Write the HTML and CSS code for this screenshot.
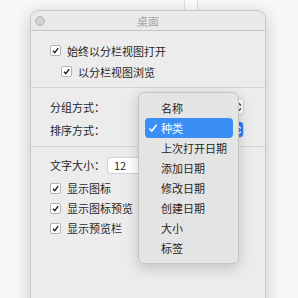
FILE: index.html
```html
<!DOCTYPE html>
<html lang="zh-CN">
<head>
    <meta charset="UTF-8">
    <title>桌面</title>
    <link rel="stylesheet" href="styles.css">
</head>
<body>
    <div class="behind"></div>
    <div class="window">
        <div class="titlebar">
            <span class="light"></span>
            <span class="title">桌面</span>
        </div>

        <div class="section first">
            <label class="check-row"><span class="box"><svg viewBox="0 0 10 10"><path d="M2.2 5.2 L4.2 7.4 L8 2.4" /></svg></span>始终以分栏视图打开</label>
            <label class="check-row indent"><span class="box"><svg viewBox="0 0 10 10"><path d="M2.2 5.2 L4.2 7.4 L8 2.4" /></svg></span>以分栏视图浏览</label>
        </div>

        <div class="section second">
            <div class="field-row">
                <span class="label">分组方式：</span>
                <span class="popup"><span class="arrows"><svg viewBox="0 0 8 14"><path d="M2 5.5 L4 3.5 L6 5.5 M2 8.5 L4 10.5 L6 8.5" /></svg></span></span>
            </div>
            <div class="field-row">
                <span class="label">排序方式：</span>
                <span class="popup"><span class="arrows blue"><svg viewBox="0 0 8 14"><path d="M2 5.5 L4 3.5 L6 5.5 M2 8.5 L4 10.5 L6 8.5" /></svg></span></span>
            </div>
        </div>

        <div class="section third">
            <div class="field-row size-row">
                <span class="label short">文字大小：</span>
                <span class="textbox">12</span>
            </div>
            <label class="check-row"><span class="box"><svg viewBox="0 0 10 10"><path d="M2.2 5.2 L4.2 7.4 L8 2.4" /></svg></span>显示图标</label>
            <label class="check-row"><span class="box"><svg viewBox="0 0 10 10"><path d="M2.2 5.2 L4.2 7.4 L8 2.4" /></svg></span>显示图标预览</label>
            <label class="check-row"><span class="box"><svg viewBox="0 0 10 10"><path d="M2.2 5.2 L4.2 7.4 L8 2.4" /></svg></span>显示预览栏</label>
        </div>

        <div class="menu">
            <div class="item">名称</div>
            <div class="item selected"><svg class="tick" viewBox="0 0 10 10"><path d="M1.5 5.4 L3.8 8 L8.6 1.8" /></svg>种类</div>
            <div class="item">上次打开日期</div>
            <div class="item">添加日期</div>
            <div class="item">修改日期</div>
            <div class="item">创建日期</div>
            <div class="item">大小</div>
            <div class="item">标签</div>
        </div>
    </div>
</body>
</html>
```

FILE: styles.css
```css
body {
    margin: 0;
    height: 298px;
    overflow: hidden;
    background: #f7f7f7;
    font-family: "Noto Sans CJK SC", "Noto Sans", sans-serif;
    font-size: 11px;
    color: #262626;
}
.behind {
    width: 12px;
    height: 10px;
    margin-left: 184px;
    background: #fcfcfc;
    border-left: 1px solid #dedede;
    border-right: 1px solid #dedede;
}
.window {
    position: relative;
    margin-left: 30px;
    width: 236px;
    height: 300px;
    background: #ececec;
    border: 1px solid #c9c9c9;
    border-bottom: none;
    border-radius: 9px 9px 0 0;
    box-shadow: 0 3px 16px rgba(0, 0, 0, 0.2);
    box-sizing: border-box;
}
.titlebar {
    position: relative;
    height: 19px;
    display: flex;
    align-items: center;
    justify-content: center;
    background: #e9e9e9;
    border-bottom: 1px solid #c6c6c6;
    border-radius: 9px 9px 0 0;
}
.light {
    position: absolute;
    left: 4px;
    top: 5px;
    width: 8px;
    height: 8px;
    border-radius: 50%;
    background: #d0d0d0;
    border: 1px solid #b9b9b9;
}
.title {
    color: #a6a6a6;
    font-size: 11px;
    padding-top: 1px;
}
.section {
    display: flex;
    flex-direction: column;
    padding-left: 19px;
}
.first {
    padding-top: 9px;
    padding-bottom: 5px;
    border-bottom: 1px solid #d4d4d4;
}
.second {
    padding-top: 7px;
    padding-bottom: 5px;
    border-bottom: 1px solid #d4d4d4;
}
.third {
    padding-top: 7px;
}
.check-row {
    height: 21px;
    display: flex;
    align-items: center;
    gap: 6px;
}
.third .check-row {
    height: 20px;
}
.indent {
    padding-left: 11px;
}
.box {
    width: 9px;
    height: 9px;
    background: #ffffff;
    border: 1px solid #b3b3b3;
    border-radius: 2px;
    display: flex;
}
.box svg {
    width: 9px;
    height: 9px;
    fill: none;
    stroke: #1e1e1e;
    stroke-width: 1.6;
}
.field-row {
    height: 23px;
    display: flex;
    align-items: center;
}
.label {
    width: 88px;
}
.label.short {
    width: 57px;
}
.popup {
    width: 106px;
    height: 17px;
    background: #ffffff;
    border: 1px solid #d2d2d2;
    border-radius: 4px;
    display: flex;
    justify-content: flex-end;
    box-sizing: border-box;
}
.arrows {
    width: 8px;
    display: flex;
    align-items: center;
}
.arrows svg {
    width: 8px;
    height: 14px;
    fill: none;
    stroke: #333333;
    stroke-width: 1.2;
}
.arrows.blue {
    background: #2d7cf0;
    border-radius: 0 3px 3px 0;
}
.arrows.blue svg {
    stroke: #ffffff;
}
.size-row {
    height: 22px;
    margin-bottom: 2px;
}
.textbox {
    width: 60px;
    height: 15px;
    background: #ffffff;
    border: 1px solid #d2d2d2;
    border-radius: 4px;
    padding-left: 6px;
    line-height: 15px;
    font-size: 11px;
}
.menu {
    position: absolute;
    left: 107px;
    top: 81px;
    width: 101px;
    padding: 5px 5px 5px 6px;
    box-sizing: border-box;
    background: #e4e4e4;
    border: 1px solid #c4c4c4;
    border-radius: 6px;
    box-shadow: 0 4px 14px rgba(0, 0, 0, 0.18);
}
.item {
    height: 20px;
    line-height: 20px;
    padding-left: 16px;
    border-radius: 4px;
    position: relative;
}
.item.selected {
    background: #3a8ff7;
    color: #ffffff;
}
.tick {
    position: absolute;
    left: 3px;
    top: 5px;
    width: 10px;
    height: 10px;
    fill: none;
    stroke: #ffffff;
    stroke-width: 1.5;
}
```
